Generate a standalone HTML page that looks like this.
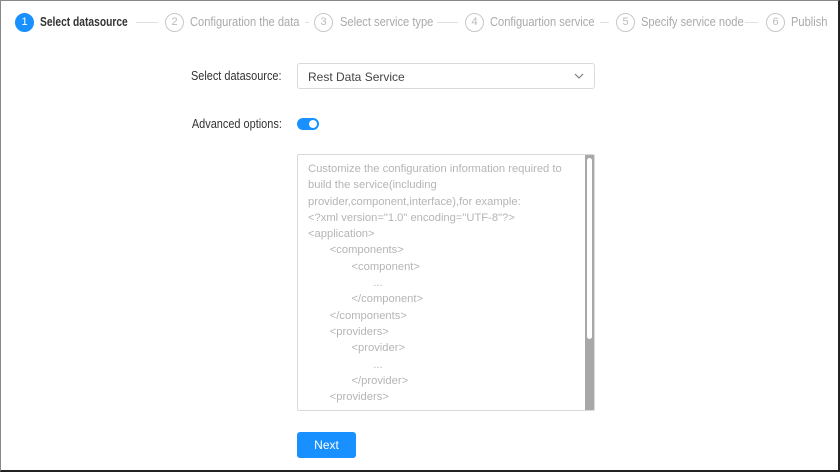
<!DOCTYPE html>
<html><head><style>
*{margin:0;padding:0;box-sizing:border-box}
body{width:840px;height:472px;background:#fff;font-family:"Liberation Sans",sans-serif;position:relative;overflow:hidden}
.frame{position:absolute;left:0;top:0;width:840px;height:472px;border:1px solid #888;border-right:2px solid #222;border-bottom:2px solid #222}
.c{position:absolute;top:13px;width:19px;height:19px;border-radius:50%;border:1px solid #c8c8c8;color:#bbb;font-size:11px;text-align:center;line-height:17px}
.c.a{background:#1890ff;border-color:#1890ff;color:#fff}
.t{position:absolute;top:15px;font-size:12.5px;color:#aaa;white-space:nowrap;transform:scaleX(.89);transform-origin:0 0}
.t.a{color:#333;font-weight:bold;transform:scaleX(.82)}
.l{position:absolute;top:22px;height:1px;background:#e0e0e0}
.lab{position:absolute;right:558px;font-size:12.5px;color:#333;white-space:nowrap;transform:scaleX(.875);transform-origin:100% 0}
.sel{position:absolute;left:297px;top:63px;width:298px;height:26px;border:1px solid #d9d9d9;border-radius:3px;font-size:12px;color:#444;padding:6px 10px}
.tog{position:absolute;left:297px;top:118px;width:22px;height:12px;border-radius:6px;background:#1890ff}
.tog i{position:absolute;right:2px;top:2px;width:8px;height:8px;border-radius:50%;background:#fff}
.ta{position:absolute;left:297px;top:154px;width:298px;height:257px;border:1px solid #d9d9d9;border-radius:2px;overflow:hidden}
.ta pre{position:absolute;left:10px;top:6px;font-family:"Liberation Sans",sans-serif;font-size:11.2px;line-height:16.3px;color:#b5b5b5}
.sb{position:absolute;left:287px;top:0;width:10px;height:256px;background:#a8a8a8}
.sb i{position:absolute;left:2px;top:3px;width:5px;height:181px;border-radius:3px;background:#fff}
.btn{position:absolute;left:297px;top:432px;width:59px;height:26px;background:#1890ff;border-radius:3px;color:#fff;font-size:12px;text-align:center;line-height:26px}
</style></head><body>
<div class="c a" style="left:15px">1</div><div class="t a" style="left:40px">Select datasource</div>
<div class="l" style="left:136px;width:22px"></div>
<div class="c" style="left:165px">2</div><div class="t" style="left:190px">Configuration the data</div>
<div class="l" style="left:305px;width:4px"></div>
<div class="c" style="left:314px">3</div><div class="t" style="left:340px">Select service type</div>
<div class="l" style="left:437px;width:21px"></div>
<div class="c" style="left:465px">4</div><div class="t" style="left:490px">Configuartion service</div>
<div class="l" style="left:600px;width:9px"></div>
<div class="c" style="left:616px">5</div><div class="t" style="left:641px">Specify service node</div>
<div class="l" style="left:745px;width:13px"></div>
<div class="c" style="left:766px">6</div><div class="t" style="left:791px">Publish</div>

<div class="lab" style="top:69px">Select datasource:</div>
<div class="sel">Rest Data Service<svg style="position:absolute;right:10px;top:9px" width="10" height="7" viewBox="0 0 10 7"><path d="M1 1L5 5L9 1" fill="none" stroke="#777" stroke-width="1.1"/></svg></div>
<div class="lab" style="top:117px">Advanced options:</div>
<div class="tog"><i></i></div>
<div class="ta"><pre>Customize the configuration information required to
build the service(including
provider,component,interface),for example:
&lt;?xml version="1.0" encoding="UTF-8"?&gt;
&lt;application&gt;
       &lt;components&gt;
              &lt;component&gt;
                     ...
              &lt;/component&gt;
       &lt;/components&gt;
       &lt;providers&gt;
              &lt;provider&gt;
                     ...
              &lt;/provider&gt;
       &lt;providers&gt;</pre><div class="sb"><i></i></div></div>
<div class="btn">Next</div>
<div class="frame"></div>
</body></html>
